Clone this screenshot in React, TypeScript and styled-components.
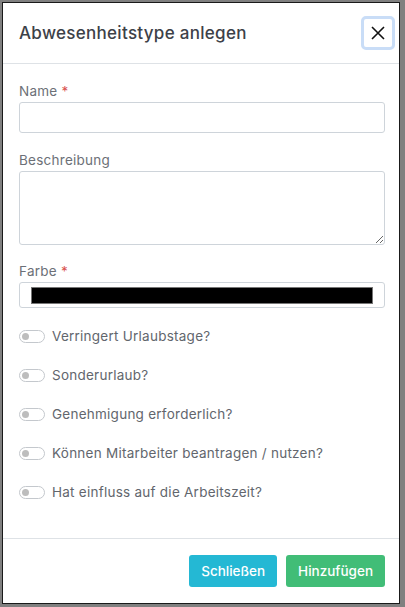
import React from "react";
import styled, { createGlobalStyle } from "styled-components";

const GlobalStyle = createGlobalStyle`
  html, body {
    margin: 0;
    padding: 0;
    background: #808080;
  }
  body {
    font-family: Inter, "Noto Sans", sans-serif;
  }
  * { box-sizing: border-box; }
`;

const Backdrop = styled.div`
  width: 405px;
  height: 607px;
  padding: 2px 5px 3px 2px;
`;

const Modal = styled.div`
  height: 100%;
  background: #fff;
  border: 1px solid #1a1a1a;
  display: flex;
  flex-direction: column;
`;

const Header = styled.div`
  height: 61px;
  display: flex;
  align-items: center;
  justify-content: space-between;
  padding: 0 4px 0 16px;
  border-bottom: 1px solid #dee2e6;
`;

const Title = styled.h5`
  margin: 0;
  font-size: 17px;
  font-weight: 500;
  color: #3d4148;
  letter-spacing: 0.3px;
`;

const CloseButton = styled.button`
  width: 34px;
  height: 34px;
  border: 3px solid #c9ddf7;
  border-radius: 5px;
  background: #fff;
  display: flex;
  align-items: center;
  justify-content: center;
  padding: 0;
  cursor: pointer;
`;

const Body = styled.div`
  flex: 1;
  padding: 19px 14px 0 16px;
  display: flex;
  flex-direction: column;
`;

const Field = styled.div<{ $gap: number }>`
  margin-bottom: ${(p) => p.$gap}px;
`;

const Label = styled.label`
  display: block;
  font-size: 13.5px;
  line-height: 16px;
  letter-spacing: 0.25px;
  color: #6c7077;
  margin-bottom: 3px;
`;

const Required = styled.span`
  color: #d9534f;
`;

const TextInput = styled.input`
  display: block;
  width: 100%;
  height: 31px;
  border: 1px solid #ced4da;
  border-radius: 3px;
  font-family: inherit;
  font-size: 13px;
  padding: 0 8px;
`;

const TextArea = styled.textarea`
  display: block;
  width: 100%;
  height: 74px;
  border: 1px solid #ced4da;
  border-radius: 3px;
  font-family: inherit;
  font-size: 13px;
  padding: 6px 8px;
  resize: vertical;
`;

const ColorBox = styled.div`
  height: 26px;
  border: 1px solid #ced4da;
  border-radius: 3px;
  padding: 4px 11px 3px 11px;
`;

const ColorSwatch = styled.div`
  height: 17px;
  background: #000;
  border: 1px solid #767676;
`;

const SwitchList = styled.div`
  display: flex;
  flex-direction: column;
  gap: 21px;
  margin-top: 19px;
`;

const SwitchRow = styled.label`
  display: flex;
  align-items: center;
  gap: 7px;
  font-size: 13.5px;
  letter-spacing: 0.25px;
  color: #62666d;
  height: 18px;
`;

const Track = styled.span`
  width: 26px;
  height: 13px;
  border: 1px solid #c4c8cd;
  border-radius: 7px;
  position: relative;
  flex-shrink: 0;
`;

const Knob = styled.span`
  position: absolute;
  left: 2px;
  top: 2px;
  width: 7px;
  height: 7px;
  border-radius: 50%;
  background: #bdbdbd;
`;

const Footer = styled.div`
  height: 65px;
  border-top: 1px solid #dee2e6;
  display: flex;
  align-items: flex-start;
  justify-content: flex-end;
  gap: 9px;
  padding: 16px 14px 0 0;
`;

const Button = styled.button<{ $variant: "info" | "success" }>`
  height: 32px;
  padding: 0 12px;
  border: none;
  border-radius: 3px;
  font-family: inherit;
  font-size: 13.5px;
  font-weight: 500;
  color: #fff;
  background: ${(p) => (p.$variant === "info" ? "#24b8d4" : "#41bd77")};
  cursor: pointer;
`;

const switches = [
  "Verringert Urlaubstage?",
  "Sonderurlaub?",
  "Genehmigung erforderlich?",
  "Können Mitarbeiter beantragen / nutzen?",
  "Hat einfluss auf die Arbeitszeit?",
];

export default function App() {
  return (
    <>
      <GlobalStyle />
      <Backdrop>
        <Modal>
          <Header>
            <Title>Abwesenheitstype anlegen</Title>
            <CloseButton aria-label="Close">
              <svg width="14" height="14" viewBox="0 0 14 14">
                <path d="M1 1L13 13M13 1L1 13" stroke="#111" strokeWidth="1.6" />
              </svg>
            </CloseButton>
          </Header>
          <Body>
            <Field $gap={19}>
              <Label>
                Name <Required>*</Required>
              </Label>
              <TextInput />
            </Field>
            <Field $gap={18}>
              <Label>Beschreibung</Label>
              <TextArea />
            </Field>
            <Field $gap={0}>
              <Label>
                Farbe <Required>*</Required>
              </Label>
              <ColorBox>
                <ColorSwatch />
              </ColorBox>
            </Field>
            <SwitchList>
              {switches.map((s) => (
                <SwitchRow key={s}>
                  <Track>
                    <Knob />
                  </Track>
                  {s}
                </SwitchRow>
              ))}
            </SwitchList>
          </Body>
          <Footer>
            <Button $variant="info">Schließen</Button>
            <Button $variant="success">Hinzufügen</Button>
          </Footer>
        </Modal>
      </Backdrop>
    </>
  );
}
